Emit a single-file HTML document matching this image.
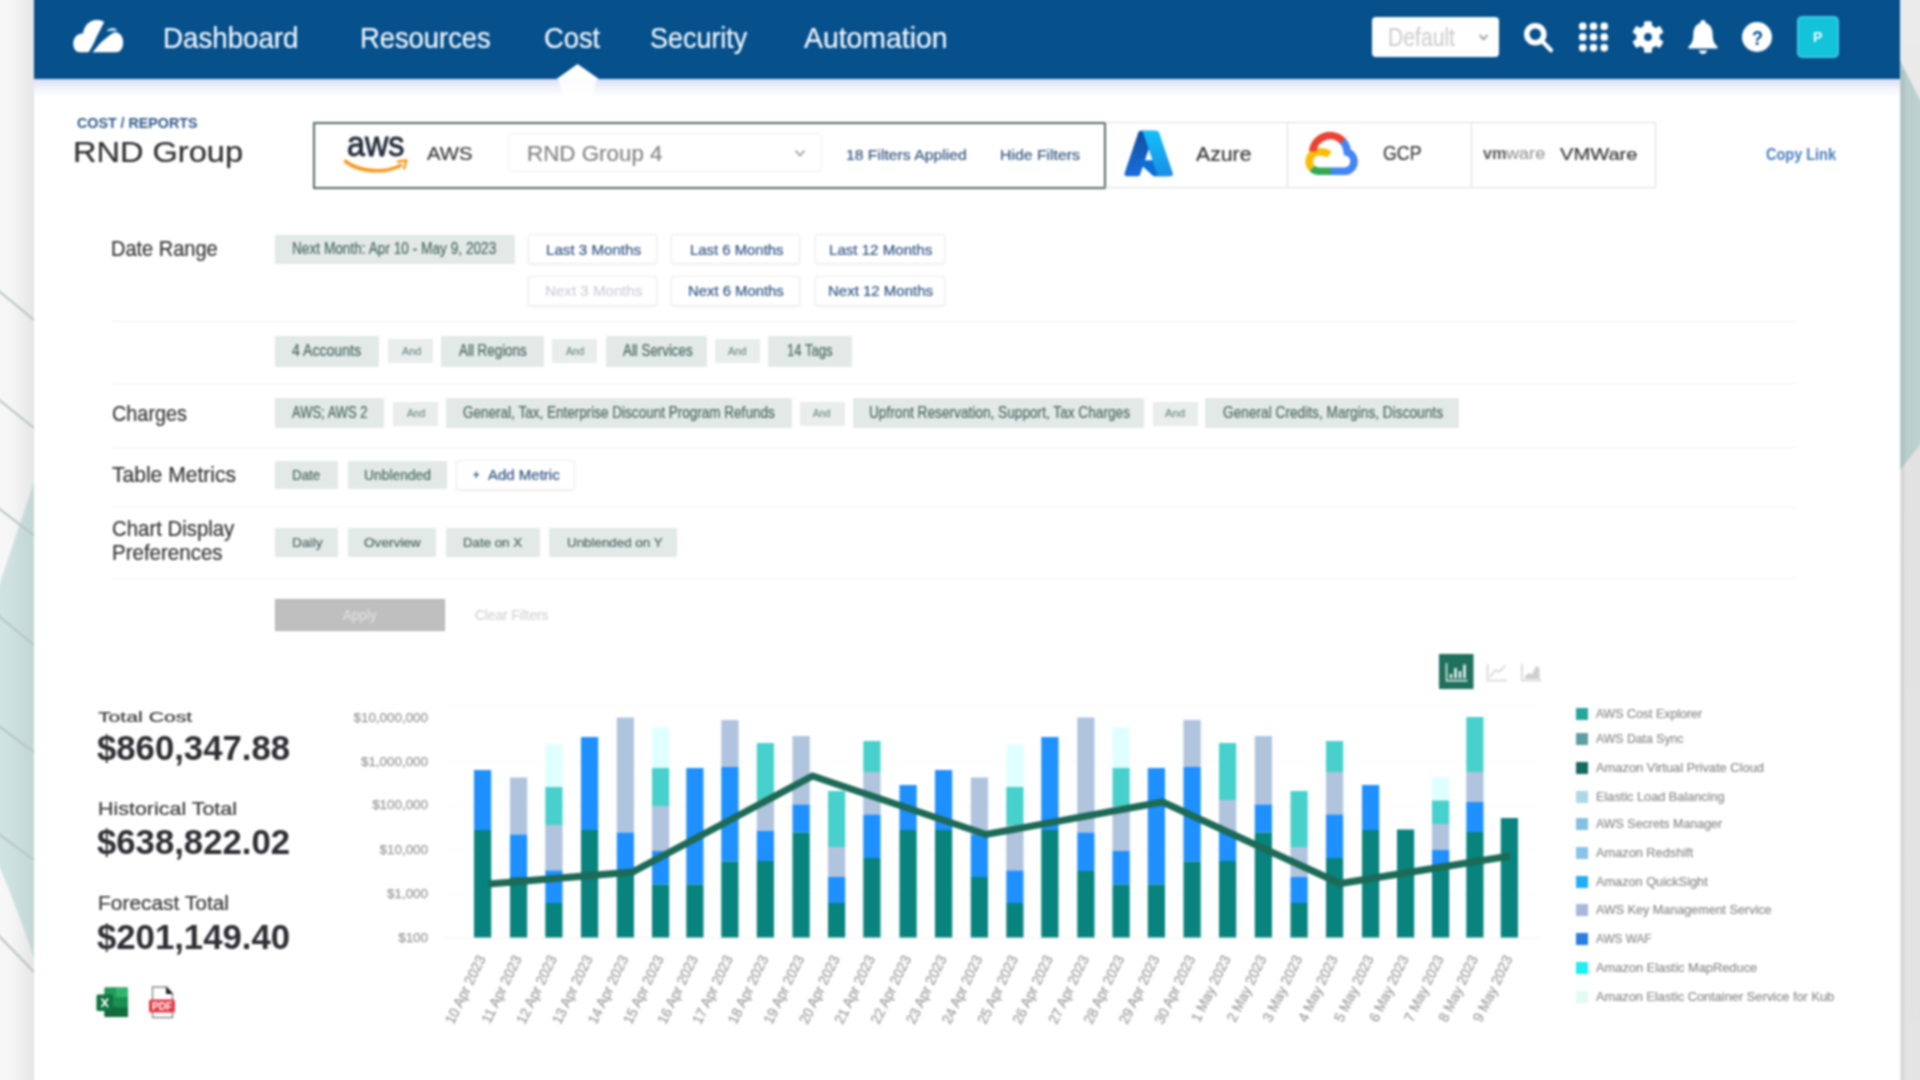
<!DOCTYPE html>
<html lang="en"><head><meta charset="utf-8"><title>Cost Reports - RND Group</title>
<style>
html,body{margin:0;padding:0;}
body{width:1920px;height:1080px;overflow:hidden;background:#f3f3f3;font-family:"Liberation Sans",sans-serif;}
#page{position:absolute;left:0;top:0;width:1920px;height:1080px;filter:blur(.8px);}
.b{position:absolute;box-sizing:border-box;}
.t{position:absolute;white-space:nowrap;line-height:1;transform-origin:0 50%;-webkit-text-stroke:.22px currentColor;}
svg{position:absolute;left:0;top:0;overflow:visible;}
</style></head>
<body>
<div id="page">
<div class="b" style="left:33px;top:-12px;width:1867px;height:1104px;background:#fff;"></div>
<div class="b" style="left:33px;top:78px;width:1867px;height:19px;background:linear-gradient(#d6ddf6,rgba(235,238,250,.6) 55%,rgba(255,255,255,0));"></div>
<div class="b" style="left:33px;top:-12px;width:1867px;height:90.5px;background:#06508b;"></div>
<div class="b" style="left:1372px;top:17px;width:126.5px;height:39.5px;background:#fff;border-radius:4px;"></div>
<div class="b" style="left:1797px;top:16px;width:42px;height:42px;background:#12c3d9;border:2px solid #38cae6;border-radius:5px;"></div>
<div class="b" style="left:312.5px;top:121.5px;width:793.5px;height:67px;border:2px solid #546a66;background:#fff;"></div>
<div class="b" style="left:1105px;top:122px;width:182.5px;height:66px;border:1px solid #dedede;border-left:none;"></div>
<div class="b" style="left:1287px;top:122px;width:184.5px;height:66px;border:1px solid #dedede;border-left:none;"></div>
<div class="b" style="left:1471px;top:122px;width:184.5px;height:66px;border:1px solid #dedede;border-left:none;"></div>
<div class="b" style="left:508px;top:133px;width:314px;height:39px;border:1px solid #efefef;border-radius:4px;"></div>
<div class="b" style="left:274.5px;top:234.5px;width:240px;height:29.5px;background:#e3e9e7;"></div>
<div class="b" style="left:528px;top:233.5px;width:129px;height:30.5px;background:#fff;border:1px solid #ececec;border-radius:3px;box-shadow:0 1px 3px rgba(0,0,0,.06);"></div>
<div class="b" style="left:671.3px;top:233.5px;width:128.7px;height:30.5px;background:#fff;border:1px solid #ececec;border-radius:3px;box-shadow:0 1px 3px rgba(0,0,0,.06);"></div>
<div class="b" style="left:815px;top:233.5px;width:129.5px;height:30.5px;background:#fff;border:1px solid #ececec;border-radius:3px;box-shadow:0 1px 3px rgba(0,0,0,.06);"></div>
<div class="b" style="left:528px;top:275.5px;width:129px;height:30px;background:#fff;border:1px solid #ececec;border-radius:3px;box-shadow:0 1px 3px rgba(0,0,0,.06);"></div>
<div class="b" style="left:671.3px;top:275.5px;width:128.7px;height:30px;background:#fff;border:1px solid #ececec;border-radius:3px;box-shadow:0 1px 3px rgba(0,0,0,.06);"></div>
<div class="b" style="left:815px;top:275.5px;width:129.5px;height:30px;background:#fff;border:1px solid #ececec;border-radius:3px;box-shadow:0 1px 3px rgba(0,0,0,.06);"></div>
<div class="b" style="left:111px;top:321px;width:1685px;height:1px;background:#f4f4f4;"></div>
<div class="b" style="left:275px;top:336px;width:104.3px;height:30.7px;background:#e3e9e7;"></div>
<div class="b" style="left:388.3px;top:339.3px;width:45px;height:24px;background:#e9edec;"></div>
<div class="b" style="left:441px;top:336px;width:103.3px;height:30.7px;background:#e3e9e7;"></div>
<div class="b" style="left:551.7px;top:339.3px;width:45.6px;height:24px;background:#e9edec;"></div>
<div class="b" style="left:605.7px;top:336px;width:101px;height:30.7px;background:#e3e9e7;"></div>
<div class="b" style="left:715px;top:339.3px;width:45px;height:24px;background:#e9edec;"></div>
<div class="b" style="left:767.7px;top:336px;width:84px;height:30.7px;background:#e3e9e7;"></div>
<div class="b" style="left:111px;top:383px;width:1685px;height:1px;background:#f4f4f4;"></div>
<div class="b" style="left:275px;top:398.3px;width:109px;height:30.2px;background:#e3e9e7;"></div>
<div class="b" style="left:392.7px;top:401.5px;width:45.6px;height:24px;background:#e9edec;"></div>
<div class="b" style="left:446px;top:398.3px;width:345.7px;height:30.2px;background:#e3e9e7;"></div>
<div class="b" style="left:800px;top:401.5px;width:45px;height:24px;background:#e9edec;"></div>
<div class="b" style="left:852.7px;top:398.3px;width:291.3px;height:30.2px;background:#e3e9e7;"></div>
<div class="b" style="left:1152.5px;top:401.5px;width:45px;height:24px;background:#e9edec;"></div>
<div class="b" style="left:1205px;top:398.3px;width:253.5px;height:30.2px;background:#e3e9e7;"></div>
<div class="b" style="left:111px;top:446.5px;width:1685px;height:1px;background:#f4f4f4;"></div>
<div class="b" style="left:275px;top:461px;width:63.3px;height:28.3px;background:#e3e9e7;"></div>
<div class="b" style="left:348.3px;top:461px;width:99px;height:28.3px;background:#e3e9e7;"></div>
<div class="b" style="left:456px;top:460px;width:119.3px;height:30px;background:#fff;border:1px solid #ececec;border-radius:3px;box-shadow:0 1px 3px rgba(0,0,0,.05);"></div>
<div class="b" style="left:111px;top:506.5px;width:1685px;height:1px;background:#f4f4f4;"></div>
<div class="b" style="left:275px;top:528.3px;width:63.3px;height:28.7px;background:#e3e9e7;"></div>
<div class="b" style="left:348.3px;top:528.3px;width:87.4px;height:28.7px;background:#e3e9e7;"></div>
<div class="b" style="left:445.7px;top:528.3px;width:94.3px;height:28.7px;background:#e3e9e7;"></div>
<div class="b" style="left:549.3px;top:528.3px;width:127.4px;height:28.7px;background:#e3e9e7;"></div>
<div class="b" style="left:111px;top:578px;width:1685px;height:1px;background:#f4f4f4;"></div>
<div class="b" style="left:275px;top:599px;width:170px;height:32px;background:#bfbfbf;border:1px solid #b3b3b3;"></div>
<svg width="1920" height="1080" viewBox="0 0 1920 1080">
<defs>
<linearGradient id="gl" x1="0" x2="1" y1="0" y2="0"><stop offset="0" stop-color="#f9f9f9"/><stop offset=".5" stop-color="#f6f6f6"/><stop offset=".75" stop-color="#eeeeee"/><stop offset="1" stop-color="#e5e5e5"/></linearGradient>
<linearGradient id="gt" x1="0" x2="1" y1="0" y2="0"><stop offset="0" stop-color="#d1e5e4"/><stop offset=".45" stop-color="#cde2e1"/><stop offset="1" stop-color="#c2d7d5"/></linearGradient>
<linearGradient id="gt2" x1="0" x2="1" y1="0" y2="0"><stop offset="0" stop-color="#b8cccb"/><stop offset="1" stop-color="#c2d5d3"/></linearGradient>
<linearGradient id="gr" x1="0" x2="0" y1="0" y2="1"><stop offset="0" stop-color="#ececec"/><stop offset=".4" stop-color="#e2e2e2"/><stop offset="1" stop-color="#e4e4e4"/></linearGradient>
</defs>
<rect x="-12" y="-12" width="46" height="1104" fill="url(#gl)"/>
<path d="M34 482 L0 583 L-12 618 L-12 838 L0 868 Q16 905 34 958 Z" fill="url(#gt)"/>
<g stroke="#b9c3c4" stroke-width="2" fill="none">
<path d="M-12 282 L34 320"/><path d="M-12 391 L34 428"/><path d="M-12 500 L34 535.500"/><path d="M-12 607 L34 645"/><path d="M-12 718 L34 752"/><path d="M-12 826 L34 860"/><path d="M-12 924.500 L34 972"/>
</g>
<rect x="1900" y="-12" width="32" height="1104" fill="url(#gr)"/>
<path d="M1900 60 L1932 124 L1932 430 L1900 470 Z" fill="url(#gt2)"/>
<rect x="1901" y="70" width="3.500" height="1030" fill="#000" opacity=".055"/>
</svg>
<svg width="1920" height="100" viewBox="0 0 1920 100">
<!-- active-tab caret -->
<path d="M556.500 79 L577.500 64 L599 79 Z" fill="#fff"/>
<path d="M558 78.500 L597 78.500 L592 96 L563 96 Z" fill="#fff" opacity=".85"/>
<!-- logo cloud -->
<g fill="#fff">
<path d="M80 52.300 C75 52.300 72.800 47 73.300 42.500 C73.800 37 78 33 83 33.500 C84 27 88 21.500 94 20.300 C97.500 19.700 101.500 20.200 104.200 22 L96.500 37 C95 41 92.500 46.500 88.500 52.300 Z"/>
<path d="M92.500 52.300 C96.500 47.500 99.500 43.500 103.500 40.200 C107 37.200 110.500 34.300 114 32.500 C119 31.500 122.500 35.500 123.100 41 C123.600 47 121 52.300 116 52.300 Z"/>
<path d="M106.500 31.300 C108 28.500 111.500 27.200 114.500 28.300 C116 28.900 117 30 117.300 31 C114 30.600 110 30.700 106.500 31.300 Z" fill="#cfe5fa"/>
</g>
<!-- select chevron -->
<path d="M1479.500 35 L1483.500 39.200 L1487.500 35" stroke="#a5a5a5" stroke-width="2" fill="none"/>
<!-- search -->
<circle cx="1535.300" cy="34.300" r="8.500" stroke="#fff" stroke-width="5.600" fill="none"/>
<path d="M1542.500 41.500 L1551 50.200" stroke="#fff" stroke-width="4.200" stroke-linecap="round"/>
<!-- grid -->
<g fill="#fff">
<rect x="1579" y="22.500" width="7.600" height="7.600" rx="3.400"/><rect x="1589.700" y="22.500" width="7.600" height="7.600" rx="3.400"/><rect x="1600.400" y="22.500" width="7.600" height="7.600" rx="3.400"/>
<rect x="1579" y="33.200" width="7.600" height="7.600" rx="3.400"/><rect x="1589.700" y="33.200" width="7.600" height="7.600" rx="3.400"/><rect x="1600.400" y="33.200" width="7.600" height="7.600" rx="3.400"/>
<rect x="1579" y="43.900" width="7.600" height="7.600" rx="3.400"/><rect x="1589.700" y="43.900" width="7.600" height="7.600" rx="3.400"/><rect x="1600.400" y="43.900" width="7.600" height="7.600" rx="3.400"/>
</g>
<!-- gear -->
<g transform="translate(1648 37)" fill="#fff">
<rect x="-4" y="-15.800" width="8" height="8" rx="1.500"/>
<rect x="-4" y="-15.800" width="8" height="8" rx="1.500" transform="rotate(60)"/>
<rect x="-4" y="-15.800" width="8" height="8" rx="1.500" transform="rotate(120)"/>
<rect x="-4" y="-15.800" width="8" height="8" rx="1.500" transform="rotate(180)"/>
<rect x="-4" y="-15.800" width="8" height="8" rx="1.500" transform="rotate(240)"/>
<rect x="-4" y="-15.800" width="8" height="8" rx="1.500" transform="rotate(300)"/>
<circle r="11.700"/>
<circle r="3.900" fill="#06508b"/>
</g>
<!-- bell -->
<g fill="#fff">
<path d="M1703 20 C1705 20 1706 21.500 1705.700 23 C1710.500 24.500 1712.700 29 1712.700 35 C1712.700 41 1714.500 44 1717.500 46.500 L1717.500 48.500 L1688.500 48.500 L1688.500 46.500 C1691.500 44 1693.300 41 1693.300 35 C1693.300 29 1695.500 24.500 1700.300 23 C1700 21.500 1701 20 1703 20 Z"/>
<path d="M1699 50.500 L1707 50.500 C1707 52.500 1705.300 54 1703 54 C1700.700 54 1699 52.500 1699 50.500 Z"/>
</g>
<!-- help -->
<circle cx="1757" cy="37" r="15" fill="#fff"/>
</svg>
<svg width="1920" height="200" viewBox="0 0 1920 200">
<defs>
<linearGradient id="az1" x1="0" x2="0" y1="0" y2="1"><stop offset="0" stop-color="#0f4da0"/><stop offset="1" stop-color="#1a6edb"/></linearGradient>
<linearGradient id="az2" x1="0" x2="0" y1="0" y2="1"><stop offset="0" stop-color="#12c0fa"/><stop offset="1" stop-color="#1b8de6"/></linearGradient>
</defs>
<!-- aws smile -->
<path d="M345.500 161.500 C360 172.500 386 173.500 400.500 165.500" stroke="#f79a1d" stroke-width="3.600" fill="none" stroke-linecap="round"/>
<path d="M398 161.500 L406.500 160.500 L404 168.500" stroke="#f79a1d" stroke-width="2.400" fill="none" stroke-linejoin="round" stroke-linecap="round"/>
<!-- select chevron -->
<path d="M795.500 150.500 L800 155.500 L804.500 150.500" stroke="#9b9b9b" stroke-width="1.800" fill="none"/>
<!-- azure logo -->
<g transform="translate(1122.200 127.200) scale(.552 .548)">
<path d="M33.338 6.544h26.038l-27.030 80.087a4.152 4.152 0 0 1-3.933 2.824H8.149a4.145 4.145 0 0 1-3.928-5.470L29.404 9.368a4.152 4.152 0 0 1 3.934-2.824z" fill="url(#az1)"/>
<path d="M71.175 60.261h-41.290a1.911 1.911 0 0 0-1.305 3.309l26.532 24.764a4.171 4.171 0 0 0 2.846 1.121h23.380z" fill="#0a6fd6"/>
<path d="M66.595 9.364a4.145 4.145 0 0 0-3.928-2.820H33.648a4.146 4.146 0 0 1 3.928 2.820l25.184 74.620a4.146 4.146 0 0 1-3.928 5.472h29.020a4.146 4.146 0 0 0 3.927-5.472z" fill="url(#az2)"/>
</g>
<!-- gcp logo -->
<g fill="none" stroke-width="7.600">
<path d="M1312.100 168.400 A9.800 9.800 0 0 1 1319 151.700 C1323 151.700 1326.500 152.400 1329.500 154.500" stroke="#fbbc05"/>
<path d="M1332 171.300 L1319 171.300 A9.800 9.800 0 0 1 1312.100 168.400" stroke="#34a853"/>
<path d="M1342.300 140.700 A17.400 17.400 0 0 1 1347.100 150.500 L1347.300 152.200 A9.800 9.800 0 0 1 1344.500 171.300 L1331 171.300" stroke="#4285f4"/>
<path d="M1312.700 151.500 A17.400 17.400 0 0 1 1342.800 141.200" stroke="#ea4335"/>
</g>
</svg>
<svg width="1920" height="1080" viewBox="0 0 1920 1080" font-family="Liberation Sans, sans-serif">
<rect x="445" y="705.5" width="1095" height="1" fill="#f7f7f7"/>
<rect x="445" y="761.5" width="1095" height="1" fill="#f7f7f7"/>
<rect x="445" y="805.5" width="1095" height="1" fill="#f7f7f7"/>
<rect x="445" y="849.5" width="1095" height="1" fill="#f7f7f7"/>
<rect x="445" y="893.5" width="1095" height="1" fill="#f7f7f7"/>
<rect x="445" y="937.500" width="1095" height="1" fill="#f4f4f4"/>
<rect x="474" y="770" width="17.2" height="60" fill="#1e90ff"/>
<rect x="474" y="830" width="17.2" height="107.5" fill="#08837e"/>
<rect x="510" y="777.5" width="17.2" height="57" fill="#b0c4de"/>
<rect x="510" y="834.5" width="17.2" height="42.5" fill="#1e90ff"/>
<rect x="510" y="877" width="17.2" height="60.5" fill="#08837e"/>
<rect x="545.3" y="744" width="17.2" height="43" fill="#e0ffff"/>
<rect x="545.3" y="787" width="17.2" height="38" fill="#48d1cc"/>
<rect x="545.3" y="825" width="17.2" height="45.5" fill="#b0c4de"/>
<rect x="545.3" y="870.5" width="17.2" height="32.5" fill="#1e90ff"/>
<rect x="545.3" y="903" width="17.2" height="34.5" fill="#08837e"/>
<rect x="581" y="737" width="17.2" height="93" fill="#1e90ff"/>
<rect x="581" y="830" width="17.2" height="107.5" fill="#08837e"/>
<rect x="616.8" y="717.5" width="17.2" height="115" fill="#b0c4de"/>
<rect x="616.8" y="832.5" width="17.2" height="38.5" fill="#1e90ff"/>
<rect x="616.8" y="871" width="17.2" height="66.5" fill="#08837e"/>
<rect x="652" y="727.5" width="17.2" height="40.5" fill="#e0ffff"/>
<rect x="652" y="768" width="17.2" height="38" fill="#48d1cc"/>
<rect x="652" y="806" width="17.2" height="45" fill="#b0c4de"/>
<rect x="652" y="851" width="17.2" height="33.5" fill="#1e90ff"/>
<rect x="652" y="884.5" width="17.2" height="53" fill="#08837e"/>
<rect x="686.3" y="768" width="17.2" height="116.5" fill="#1e90ff"/>
<rect x="686.3" y="884.5" width="17.2" height="53" fill="#08837e"/>
<rect x="721.3" y="720" width="17.2" height="47" fill="#b0c4de"/>
<rect x="721.3" y="767" width="17.2" height="94.5" fill="#1e90ff"/>
<rect x="721.3" y="861.5" width="17.2" height="76" fill="#08837e"/>
<rect x="756.8" y="743" width="17.2" height="57" fill="#48d1cc"/>
<rect x="756.8" y="800" width="17.2" height="31" fill="#b0c4de"/>
<rect x="756.8" y="831" width="17.2" height="30" fill="#1e90ff"/>
<rect x="756.8" y="861" width="17.2" height="76.5" fill="#08837e"/>
<rect x="792.5" y="736" width="17.2" height="68.5" fill="#b0c4de"/>
<rect x="792.5" y="804.5" width="17.2" height="28" fill="#1e90ff"/>
<rect x="792.5" y="832.5" width="17.2" height="105" fill="#08837e"/>
<rect x="828" y="791" width="17.2" height="56" fill="#48d1cc"/>
<rect x="828" y="847" width="17.2" height="30" fill="#b0c4de"/>
<rect x="828" y="877" width="17.2" height="26" fill="#1e90ff"/>
<rect x="828" y="903" width="17.2" height="34.5" fill="#08837e"/>
<rect x="863.3" y="741" width="17.2" height="31" fill="#48d1cc"/>
<rect x="863.3" y="772" width="17.2" height="42.5" fill="#b0c4de"/>
<rect x="863.3" y="814.5" width="17.2" height="43.5" fill="#1e90ff"/>
<rect x="863.3" y="858" width="17.2" height="79.5" fill="#08837e"/>
<rect x="899.5" y="785" width="17.2" height="45" fill="#1e90ff"/>
<rect x="899.5" y="830" width="17.2" height="107.5" fill="#08837e"/>
<rect x="935" y="770" width="17.2" height="60" fill="#1e90ff"/>
<rect x="935" y="830" width="17.2" height="107.5" fill="#08837e"/>
<rect x="970.8" y="777.5" width="17.2" height="57" fill="#b0c4de"/>
<rect x="970.8" y="834.5" width="17.2" height="42.5" fill="#1e90ff"/>
<rect x="970.8" y="877" width="17.2" height="60.5" fill="#08837e"/>
<rect x="1006.3" y="744" width="17.2" height="43" fill="#e0ffff"/>
<rect x="1006.3" y="787" width="17.2" height="38" fill="#48d1cc"/>
<rect x="1006.3" y="825" width="17.2" height="45.5" fill="#b0c4de"/>
<rect x="1006.3" y="870.5" width="17.2" height="32.5" fill="#1e90ff"/>
<rect x="1006.3" y="903" width="17.2" height="34.5" fill="#08837e"/>
<rect x="1041.3" y="737" width="17.2" height="93" fill="#1e90ff"/>
<rect x="1041.3" y="830" width="17.2" height="107.5" fill="#08837e"/>
<rect x="1077.3" y="717.5" width="17.2" height="115" fill="#b0c4de"/>
<rect x="1077.3" y="832.5" width="17.2" height="38.5" fill="#1e90ff"/>
<rect x="1077.3" y="871" width="17.2" height="66.5" fill="#08837e"/>
<rect x="1112.5" y="727.5" width="17.2" height="40.5" fill="#e0ffff"/>
<rect x="1112.5" y="768" width="17.2" height="38" fill="#48d1cc"/>
<rect x="1112.5" y="806" width="17.2" height="45" fill="#b0c4de"/>
<rect x="1112.5" y="851" width="17.2" height="33.5" fill="#1e90ff"/>
<rect x="1112.5" y="884.5" width="17.2" height="53" fill="#08837e"/>
<rect x="1147.8" y="768" width="17.2" height="116.5" fill="#1e90ff"/>
<rect x="1147.8" y="884.5" width="17.2" height="53" fill="#08837e"/>
<rect x="1183.5" y="720" width="17.2" height="47" fill="#b0c4de"/>
<rect x="1183.5" y="767" width="17.2" height="94.5" fill="#1e90ff"/>
<rect x="1183.5" y="861.5" width="17.2" height="76" fill="#08837e"/>
<rect x="1219" y="743" width="17.2" height="57" fill="#48d1cc"/>
<rect x="1219" y="800" width="17.2" height="31" fill="#b0c4de"/>
<rect x="1219" y="831" width="17.2" height="30" fill="#1e90ff"/>
<rect x="1219" y="861" width="17.2" height="76.5" fill="#08837e"/>
<rect x="1254.8" y="736" width="17.2" height="68.5" fill="#b0c4de"/>
<rect x="1254.8" y="804.5" width="17.2" height="28" fill="#1e90ff"/>
<rect x="1254.8" y="832.5" width="17.2" height="105" fill="#08837e"/>
<rect x="1290.5" y="791" width="17.2" height="56" fill="#48d1cc"/>
<rect x="1290.5" y="847" width="17.2" height="30" fill="#b0c4de"/>
<rect x="1290.5" y="877" width="17.2" height="26" fill="#1e90ff"/>
<rect x="1290.5" y="903" width="17.2" height="34.5" fill="#08837e"/>
<rect x="1326" y="741" width="17.2" height="31" fill="#48d1cc"/>
<rect x="1326" y="772" width="17.2" height="42.5" fill="#b0c4de"/>
<rect x="1326" y="814.5" width="17.2" height="43.5" fill="#1e90ff"/>
<rect x="1326" y="858" width="17.2" height="79.5" fill="#08837e"/>
<rect x="1362" y="785" width="17.2" height="45" fill="#1e90ff"/>
<rect x="1362" y="830" width="17.2" height="107.5" fill="#08837e"/>
<rect x="1397" y="829.5" width="17.2" height="108" fill="#08837e"/>
<rect x="1432" y="777.5" width="17.2" height="23" fill="#e0ffff"/>
<rect x="1432" y="800.5" width="17.2" height="23.5" fill="#48d1cc"/>
<rect x="1432" y="824" width="17.2" height="26" fill="#b0c4de"/>
<rect x="1432" y="850" width="17.2" height="15" fill="#1e90ff"/>
<rect x="1432" y="865" width="17.2" height="72.5" fill="#08837e"/>
<rect x="1466.3" y="717" width="17.2" height="55" fill="#48d1cc"/>
<rect x="1466.3" y="772" width="17.2" height="30" fill="#b0c4de"/>
<rect x="1466.3" y="802" width="17.2" height="30" fill="#1e90ff"/>
<rect x="1466.3" y="832" width="17.2" height="105.5" fill="#08837e"/>
<rect x="1500.8" y="818" width="17.2" height="119.5" fill="#08837e"/>
<polyline points="488.500,884 632.500,872 812.500,776 986,834.500 1162.500,802 1340,883.500 1510,856" fill="none" stroke="#1d6a57" stroke-width="7" stroke-linejoin="miter" stroke-linecap="butt"/>
<text font-size="14.500" fill="#a2a2a2" stroke="#a2a2a2" stroke-width=".3" text-anchor="end" transform="translate(486 958.500) rotate(-64) scale(.948 1)">10 Apr 2023</text>
<text font-size="14.500" fill="#a2a2a2" stroke="#a2a2a2" stroke-width=".3" text-anchor="end" transform="translate(522 958.500) rotate(-64) scale(.948 1)">11 Apr 2023</text>
<text font-size="14.500" fill="#a2a2a2" stroke="#a2a2a2" stroke-width=".3" text-anchor="end" transform="translate(557.3 958.500) rotate(-64) scale(.948 1)">12 Apr 2023</text>
<text font-size="14.500" fill="#a2a2a2" stroke="#a2a2a2" stroke-width=".3" text-anchor="end" transform="translate(593 958.500) rotate(-64) scale(.948 1)">13 Apr 2023</text>
<text font-size="14.500" fill="#a2a2a2" stroke="#a2a2a2" stroke-width=".3" text-anchor="end" transform="translate(628.8 958.500) rotate(-64) scale(.948 1)">14 Apr 2023</text>
<text font-size="14.500" fill="#a2a2a2" stroke="#a2a2a2" stroke-width=".3" text-anchor="end" transform="translate(664 958.500) rotate(-64) scale(.948 1)">15 Apr 2023</text>
<text font-size="14.500" fill="#a2a2a2" stroke="#a2a2a2" stroke-width=".3" text-anchor="end" transform="translate(698.3 958.500) rotate(-64) scale(.948 1)">16 Apr 2023</text>
<text font-size="14.500" fill="#a2a2a2" stroke="#a2a2a2" stroke-width=".3" text-anchor="end" transform="translate(733.3 958.500) rotate(-64) scale(.948 1)">17 Apr 2023</text>
<text font-size="14.500" fill="#a2a2a2" stroke="#a2a2a2" stroke-width=".3" text-anchor="end" transform="translate(768.8 958.500) rotate(-64) scale(.948 1)">18 Apr 2023</text>
<text font-size="14.500" fill="#a2a2a2" stroke="#a2a2a2" stroke-width=".3" text-anchor="end" transform="translate(804.5 958.500) rotate(-64) scale(.948 1)">19 Apr 2023</text>
<text font-size="14.500" fill="#a2a2a2" stroke="#a2a2a2" stroke-width=".3" text-anchor="end" transform="translate(840 958.500) rotate(-64) scale(.948 1)">20 Apr 2023</text>
<text font-size="14.500" fill="#a2a2a2" stroke="#a2a2a2" stroke-width=".3" text-anchor="end" transform="translate(875.3 958.500) rotate(-64) scale(.948 1)">21 Apr 2023</text>
<text font-size="14.500" fill="#a2a2a2" stroke="#a2a2a2" stroke-width=".3" text-anchor="end" transform="translate(911.5 958.500) rotate(-64) scale(.948 1)">22 Apr 2023</text>
<text font-size="14.500" fill="#a2a2a2" stroke="#a2a2a2" stroke-width=".3" text-anchor="end" transform="translate(947 958.500) rotate(-64) scale(.948 1)">23 Apr 2023</text>
<text font-size="14.500" fill="#a2a2a2" stroke="#a2a2a2" stroke-width=".3" text-anchor="end" transform="translate(982.8 958.500) rotate(-64) scale(.948 1)">24 Apr 2023</text>
<text font-size="14.500" fill="#a2a2a2" stroke="#a2a2a2" stroke-width=".3" text-anchor="end" transform="translate(1018.3 958.500) rotate(-64) scale(.948 1)">25 Apr 2023</text>
<text font-size="14.500" fill="#a2a2a2" stroke="#a2a2a2" stroke-width=".3" text-anchor="end" transform="translate(1053.3 958.500) rotate(-64) scale(.948 1)">26 Apr 2023</text>
<text font-size="14.500" fill="#a2a2a2" stroke="#a2a2a2" stroke-width=".3" text-anchor="end" transform="translate(1089.3 958.500) rotate(-64) scale(.948 1)">27 Apr 2023</text>
<text font-size="14.500" fill="#a2a2a2" stroke="#a2a2a2" stroke-width=".3" text-anchor="end" transform="translate(1124.5 958.500) rotate(-64) scale(.948 1)">28 Apr 2023</text>
<text font-size="14.500" fill="#a2a2a2" stroke="#a2a2a2" stroke-width=".3" text-anchor="end" transform="translate(1159.8 958.500) rotate(-64) scale(.948 1)">29 Apr 2023</text>
<text font-size="14.500" fill="#a2a2a2" stroke="#a2a2a2" stroke-width=".3" text-anchor="end" transform="translate(1195.5 958.500) rotate(-64) scale(.948 1)">30 Apr 2023</text>
<text font-size="14.500" fill="#a2a2a2" stroke="#a2a2a2" stroke-width=".3" text-anchor="end" transform="translate(1231 958.500) rotate(-64) scale(.948 1)">1 May 2023</text>
<text font-size="14.500" fill="#a2a2a2" stroke="#a2a2a2" stroke-width=".3" text-anchor="end" transform="translate(1266.8 958.500) rotate(-64) scale(.948 1)">2 May 2023</text>
<text font-size="14.500" fill="#a2a2a2" stroke="#a2a2a2" stroke-width=".3" text-anchor="end" transform="translate(1302.5 958.500) rotate(-64) scale(.948 1)">3 May 2023</text>
<text font-size="14.500" fill="#a2a2a2" stroke="#a2a2a2" stroke-width=".3" text-anchor="end" transform="translate(1338 958.500) rotate(-64) scale(.948 1)">4 May 2023</text>
<text font-size="14.500" fill="#a2a2a2" stroke="#a2a2a2" stroke-width=".3" text-anchor="end" transform="translate(1374 958.500) rotate(-64) scale(.948 1)">5 May 2023</text>
<text font-size="14.500" fill="#a2a2a2" stroke="#a2a2a2" stroke-width=".3" text-anchor="end" transform="translate(1409 958.500) rotate(-64) scale(.948 1)">6 May 2023</text>
<text font-size="14.500" fill="#a2a2a2" stroke="#a2a2a2" stroke-width=".3" text-anchor="end" transform="translate(1444 958.500) rotate(-64) scale(.948 1)">7 May 2023</text>
<text font-size="14.500" fill="#a2a2a2" stroke="#a2a2a2" stroke-width=".3" text-anchor="end" transform="translate(1478.3 958.500) rotate(-64) scale(.948 1)">8 May 2023</text>
<text font-size="14.500" fill="#a2a2a2" stroke="#a2a2a2" stroke-width=".3" text-anchor="end" transform="translate(1512.8 958.500) rotate(-64) scale(.948 1)">9 May 2023</text>
<text x="428" y="722.3" font-size="13.400" fill="#9a9a9a" stroke="#9a9a9a" stroke-width=".25" text-anchor="end">$10,000,000</text>
<text x="428" y="765.8" font-size="13.400" fill="#9a9a9a" stroke="#9a9a9a" stroke-width=".25" text-anchor="end">$1,000,000</text>
<text x="428" y="809.3" font-size="13.400" fill="#9a9a9a" stroke="#9a9a9a" stroke-width=".25" text-anchor="end">$100,000</text>
<text x="428" y="853.8" font-size="13.400" fill="#9a9a9a" stroke="#9a9a9a" stroke-width=".25" text-anchor="end">$10,000</text>
<text x="428" y="897.8" font-size="13.400" fill="#9a9a9a" stroke="#9a9a9a" stroke-width=".25" text-anchor="end">$1,000</text>
<text x="428" y="942.3" font-size="13.400" fill="#9a9a9a" stroke="#9a9a9a" stroke-width=".25" text-anchor="end">$100</text>
<rect x="1576" y="708" width="12" height="12" fill="#26a69a"/>
<rect x="1576" y="733" width="12" height="12" fill="#5f9ea0"/>
<rect x="1576" y="762" width="12" height="12" fill="#146b60"/>
<rect x="1576" y="791" width="12" height="12" fill="#add8e6"/>
<rect x="1576" y="818" width="12" height="12" fill="#87bfe3"/>
<rect x="1576" y="847" width="12" height="12" fill="#87c3ea"/>
<rect x="1576" y="876" width="12" height="12" fill="#22aef5"/>
<rect x="1576" y="904" width="12" height="12" fill="#a7b8da"/>
<rect x="1576" y="933" width="12" height="12" fill="#2a7de1"/>
<rect x="1576" y="962" width="12" height="12" fill="#1cf0f2"/>
<rect x="1576" y="991" width="12" height="12" fill="#e2fbf6"/>
<rect x="1439" y="654" width="34.500" height="35" fill="#1f705d"/>
<g stroke="#e6f3ef" fill="none"><path d="M1446.500 663 L1446.500 680.800 L1467.500 680.800" stroke-width="1.500"/><path d="M1451 674 L1451 678.500 M1455.500 668 L1455.500 678.500 M1460 671 L1460 678.500 M1464.500 664.500 L1464.500 678.500" stroke-width="2.600"/></g>
<g stroke="#d4d4d4" fill="none" stroke-width="1.600"><path d="M1487.500 664 L1487.500 680.500 L1507 680.500"/><path d="M1490 677 L1495.500 670 L1499 672 L1505.500 665.500"/></g>
<g stroke="#d4d4d4" fill="none" stroke-width="1.600"><path d="M1522 664 L1522 680.500 L1541.500 680.500"/></g>
<path d="M1525 679 L1525 676 L1529 673 L1532 674.500 L1536 666 L1539.500 668 L1539.500 679 Z" fill="#cfcfcf"/>
<g><rect x="104.500" y="987.500" width="23.500" height="29.500" rx="1.500" fill="#1d8f52"/><rect x="116" y="987.500" width="12" height="10" fill="#2fb56d"/><rect x="116" y="997.500" width="12" height="10" fill="#169152"/><rect x="116" y="1007.500" width="12" height="9.500" fill="#0f6e3d"/><rect x="104.500" y="987.500" width="11.500" height="10" fill="#1f9b5a"/><rect x="104.500" y="1007" width="11.500" height="10" fill="#14683c"/><rect x="96.500" y="994.500" width="16.500" height="16.500" rx="1.500" fill="#0f7440"/><path d="M101.500 998.500 L108 1007 M108 998.500 L101.500 1007" stroke="#fff" stroke-width="1.900"/></g>
<g><path d="M152.500 987 L166.500 987 L172.500 993.500 L172.500 1017.500 L152.500 1017.500 Z" fill="#fff" stroke="#8a8a8a" stroke-width="1.400"/><path d="M166 986.500 L173 994 L166 994 Z" fill="#222"/><rect x="149" y="999.500" width="26" height="13" rx="2" fill="#e23a46"/></g>
<text x="162" y="1010.300" font-size="10" font-weight="700" fill="#fff" text-anchor="middle" textLength="20" lengthAdjust="spacingAndGlyphs">PDF</text>
</svg>
<span class="t" style="left:163.3px;top:22.53px;font-size:29.5px;color:#f1f6fc;transform:scaleX(0.9388);">Dashboard</span>
<span class="t" style="left:359.5px;top:22.53px;font-size:29.5px;color:#f1f6fc;transform:scaleX(0.9268);">Resources</span>
<span class="t" style="left:544px;top:22.53px;font-size:29.5px;color:#f1f6fc;transform:scaleX(0.9263);">Cost</span>
<span class="t" style="left:650px;top:22.53px;font-size:29.5px;color:#f1f6fc;transform:scaleX(0.9129);">Security</span>
<span class="t" style="left:804px;top:22.53px;font-size:29.5px;color:#f1f6fc;transform:scaleX(0.9616);">Automation</span>
<span class="t" style="left:1388px;top:24.49px;font-size:26px;color:#cfcfcf;transform:scaleX(0.8132);">Default</span>
<span class="t" style="left:1813px;top:30.23px;font-size:14.5px;color:#e9fbff;font-weight:700;-webkit-text-stroke:0;transform:scaleX(0.9822);">P</span>
<span class="t" style="left:1751.5px;top:26.72px;font-size:21px;color:#06508b;font-weight:700;-webkit-text-stroke:0;transform:scaleX(0.8575);">?</span>
<span class="t" style="left:76.5px;top:115.18px;font-size:15.5px;color:#2f5b8c;font-weight:700;-webkit-text-stroke:0;transform:scaleX(0.9205);">COST / REPORTS</span>
<span class="t" style="left:73px;top:136.60px;font-size:30px;color:#2f2f2f;transform:scaleX(1.0847);">RND Group</span>
<span class="t" style="left:347px;top:125.87px;font-size:35px;color:#262f3d;transform:scaleX(0.9237);-webkit-text-stroke:0.9px #262f3d;">aws</span>
<span class="t" style="left:426.5px;top:145.39px;font-size:18.8px;color:#3a3a3a;transform:scaleX(1.0809);">AWS</span>
<span class="t" style="left:527px;top:143.25px;font-size:21.8px;color:#858585;transform:scaleX(1.0262);">RND Group 4</span>
<span class="t" style="left:846px;top:147.05px;font-size:15.3px;color:#37587f;transform:scaleX(1.0286);">18 Filters Applied</span>
<span class="t" style="left:1000px;top:147.05px;font-size:15.3px;color:#37587f;transform:scaleX(1.0341);">Hide Filters</span>
<span class="t" style="left:1195.5px;top:144.66px;font-size:19.3px;color:#3a3a3a;transform:scaleX(1.1017);">Azure</span>
<span class="t" style="left:1382.5px;top:143.96px;font-size:19.3px;color:#3a3a3a;transform:scaleX(0.9211);">GCP</span>
<span class="t" style="left:1482.5px;top:144.91px;font-size:17px;color:#5a5a5a;font-weight:700;-webkit-text-stroke:0;transform:scaleX(0.9561);">vm</span>
<span class="t" style="left:1506.3px;top:144.91px;font-size:17px;color:#9a9a9a;transform:scaleX(1.0635);">ware</span>
<span class="t" style="left:1559.5px;top:145.70px;font-size:16.3px;color:#3a3a3a;transform:scaleX(1.2357);">VMWare</span>
<span class="t" style="left:1766px;top:145.53px;font-size:16.5px;color:#4a7db9;font-weight:700;-webkit-text-stroke:0;transform:scaleX(0.8776);">Copy Link</span>
<span class="t" style="left:111.3px;top:237.85px;font-size:21.8px;color:#363636;transform:scaleX(0.9172);">Date Range</span>
<span class="t" style="left:292px;top:241.21px;font-size:15.7px;color:#4a6a63;transform:scaleX(0.8710);">Next Month: Apr 10 - May 9, 2023</span>
<span class="t" style="left:546.3px;top:241.55px;font-size:15.3px;color:#345784;transform:scaleX(0.9886);">Last 3 Months</span>
<span class="t" style="left:689.5px;top:241.55px;font-size:15.3px;color:#345784;transform:scaleX(0.9730);">Last 6 Months</span>
<span class="t" style="left:828.8px;top:241.55px;font-size:15.3px;color:#345784;transform:scaleX(0.9867);">Last 12 Months</span>
<span class="t" style="left:545px;top:283.35px;font-size:15.3px;color:#cdd2d6;transform:scaleX(0.9886);">Next 3 Months</span>
<span class="t" style="left:688px;top:283.35px;font-size:15.3px;color:#345784;transform:scaleX(0.9714);">Next 6 Months</span>
<span class="t" style="left:827.5px;top:283.35px;font-size:15.3px;color:#345784;transform:scaleX(0.9800);">Next 12 Months</span>
<span class="t" style="left:291.7px;top:343.21px;font-size:15.7px;color:#4a6a63;transform:scaleX(0.8990);">4 Accounts</span>
<span class="t" style="left:401.7px;top:346.11px;font-size:10.5px;color:#6f908a;transform:scaleX(1.0328);">And</span>
<span class="t" style="left:459px;top:343.21px;font-size:15.7px;color:#4a6a63;transform:scaleX(0.8531);">All Regions</span>
<span class="t" style="left:566px;top:346.11px;font-size:10.5px;color:#6f908a;transform:scaleX(0.9793);">And</span>
<span class="t" style="left:622.7px;top:343.21px;font-size:15.7px;color:#4a6a63;transform:scaleX(0.8493);">All Services</span>
<span class="t" style="left:728.3px;top:346.11px;font-size:10.5px;color:#6f908a;transform:scaleX(0.9846);">And</span>
<span class="t" style="left:786.7px;top:343.21px;font-size:15.7px;color:#4a6a63;transform:scaleX(0.8341);">14 Tags</span>
<span class="t" style="left:111.7px;top:402.55px;font-size:21.8px;color:#363636;transform:scaleX(0.9103);">Charges</span>
<span class="t" style="left:291.7px;top:405.21px;font-size:15.7px;color:#4a6a63;transform:scaleX(0.8285);">AWS; AWS 2</span>
<span class="t" style="left:406.7px;top:408.11px;font-size:10.5px;color:#6f908a;transform:scaleX(0.9793);">And</span>
<span class="t" style="left:463.3px;top:405.21px;font-size:15.7px;color:#4a6a63;transform:scaleX(0.8621);">General, Tax, Enterprise Discount Program Refunds</span>
<span class="t" style="left:813.3px;top:408.11px;font-size:10.5px;color:#6f908a;transform:scaleX(0.9311);">And</span>
<span class="t" style="left:869px;top:405.21px;font-size:15.7px;color:#4a6a63;transform:scaleX(0.8710);">Upfront Reservation, Support, Tax Charges</span>
<span class="t" style="left:1165px;top:408.11px;font-size:10.5px;color:#6f908a;transform:scaleX(1.0702);">And</span>
<span class="t" style="left:1222.5px;top:405.21px;font-size:15.7px;color:#4a6a63;transform:scaleX(0.8731);">General Credits, Margins, Discounts</span>
<span class="t" style="left:111.7px;top:464.25px;font-size:21.8px;color:#363636;transform:scaleX(0.9657);">Table Metrics</span>
<span class="t" style="left:291.7px;top:467.65px;font-size:14px;color:#4a6a63;transform:scaleX(0.9568);">Date</span>
<span class="t" style="left:364px;top:467.65px;font-size:14px;color:#4a6a63;transform:scaleX(0.9892);">Unblended</span>
<span class="t" style="left:473px;top:468.84px;font-size:12px;color:#345784;font-weight:700;-webkit-text-stroke:0;transform:scaleX(0.9265);">+</span>
<span class="t" style="left:488.3px;top:467.65px;font-size:14px;color:#345784;transform:scaleX(1.0714);">Add Metric</span>
<span class="t" style="left:111.7px;top:518.25px;font-size:21.8px;color:#363636;transform:scaleX(0.9348);">Chart Display</span>
<span class="t" style="left:111.7px;top:542.05px;font-size:21.8px;color:#363636;transform:scaleX(0.9410);">Preferences</span>
<span class="t" style="left:291.7px;top:535.57px;font-size:13.5px;color:#4a6a63;transform:scaleX(1.0195);">Daily</span>
<span class="t" style="left:364px;top:535.57px;font-size:13.5px;color:#4a6a63;transform:scaleX(1.0077);">Overview</span>
<span class="t" style="left:463.3px;top:535.57px;font-size:13.5px;color:#4a6a63;transform:scaleX(0.9826);">Date on X</span>
<span class="t" style="left:566.7px;top:535.57px;font-size:13.5px;color:#4a6a63;transform:scaleX(0.9897);">Unblended on Y</span>
<span class="t" style="left:343.3px;top:608.15px;font-size:14px;color:#dedede;transform:scaleX(0.9534);">Apply</span>
<span class="t" style="left:475px;top:608.15px;font-size:14px;color:#d4d4d4;transform:scaleX(0.9713);">Clear Filters</span>
<span class="t" style="left:98.3px;top:709.60px;font-size:14.3px;color:#3a3a3a;transform:scaleX(1.4816);">Total Cost</span>
<span class="t" style="left:96.7px;top:730.75px;font-size:35.5px;color:#2e2e33;font-weight:700;-webkit-text-stroke:0;transform:scaleX(0.9776);">$860,347.88</span>
<span class="t" style="left:98px;top:800.06px;font-size:18px;color:#3a3a3a;transform:scaleX(1.1909);">Historical Total</span>
<span class="t" style="left:96.7px;top:825.45px;font-size:35.5px;color:#2e2e33;font-weight:700;-webkit-text-stroke:0;transform:scaleX(0.9776);">$638,822.02</span>
<span class="t" style="left:98px;top:894.29px;font-size:19.5px;color:#3a3a3a;transform:scaleX(1.0727);">Forecast Total</span>
<span class="t" style="left:96.7px;top:920.35px;font-size:35.5px;color:#2e2e33;font-weight:700;-webkit-text-stroke:0;transform:scaleX(0.9776);">$201,149.40</span>
<span class="t" style="left:1595.8px;top:708.10px;font-size:12.4px;color:#8e8e8e;">AWS Cost Explorer</span>
<span class="t" style="left:1595.8px;top:733.10px;font-size:12.4px;color:#8e8e8e;transform:scaleX(0.9901);">AWS Data Sync</span>
<span class="t" style="left:1595.8px;top:762.10px;font-size:12.4px;color:#8e8e8e;transform:scaleX(1.0394);">Amazon Virtual Private Cloud</span>
<span class="t" style="left:1595.8px;top:791.10px;font-size:12.4px;color:#8e8e8e;transform:scaleX(1.0265);">Elastic Load Balancing</span>
<span class="t" style="left:1595.8px;top:818.10px;font-size:12.4px;color:#8e8e8e;transform:scaleX(1.0051);">AWS Secrets Manager</span>
<span class="t" style="left:1595.8px;top:847.10px;font-size:12.4px;color:#8e8e8e;transform:scaleX(1.0301);">Amazon Redshift</span>
<span class="t" style="left:1595.8px;top:876.10px;font-size:12.4px;color:#8e8e8e;transform:scaleX(1.0265);">Amazon QuickSight</span>
<span class="t" style="left:1595.8px;top:904.10px;font-size:12.4px;color:#8e8e8e;transform:scaleX(1.0139);">AWS Key Management Service</span>
<span class="t" style="left:1595.8px;top:933.10px;font-size:12.4px;color:#8e8e8e;transform:scaleX(0.9523);">AWS WAF</span>
<span class="t" style="left:1595.8px;top:962.10px;font-size:12.4px;color:#8e8e8e;transform:scaleX(1.0356);">Amazon Elastic MapReduce</span>
<span class="t" style="left:1595.8px;top:991.10px;font-size:12.4px;color:#8e8e8e;transform:scaleX(1.0324);">Amazon Elastic Container Service for Kub</span>
</div>
</body></html>
